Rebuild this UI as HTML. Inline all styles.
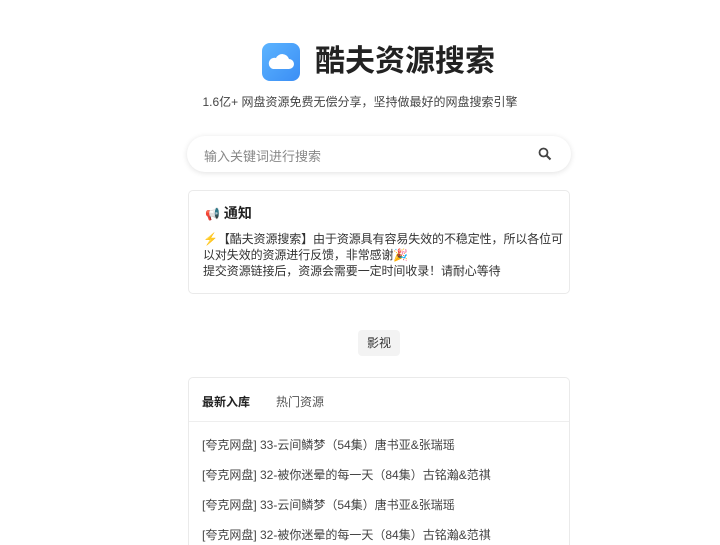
<!DOCTYPE html>
<html><head><meta charset="utf-8"><style>
*{margin:0;padding:0;box-sizing:border-box}
html,body{width:720px;height:545px;overflow:hidden}
body{background:#fff;font-family:"Liberation Sans","Noto Sans CJK SC",sans-serif;color:#333;position:relative}
.logo{position:absolute;left:262px;top:43px;width:38px;height:38px;border-radius:8px;background:linear-gradient(135deg,#5cb4ff,#3b8ef5)}
.title{position:absolute;left:315px;top:43px;font-size:30px;font-weight:bold;color:#222;line-height:38px}
.sub{position:absolute;left:0;width:720px;top:94px;text-align:center;font-size:12px;color:#444;line-height:16px}
.search{position:absolute;left:187px;top:136px;width:384px;height:36px;border-radius:18px;box-shadow:0 1px 6px rgba(0,0,0,.12);background:#fff}
.search span{position:absolute;left:17px;top:10px;font-size:13px;color:#888}
.card{position:absolute;left:188px;width:382px;border:1px solid #eaeaea;border-radius:5px;background:#fff}
.n{top:190px;height:104px}
.n h3{position:absolute;left:16px;top:12px;font-size:14px;font-weight:bold;color:#222}
.n p{position:absolute;left:14px;top:40px;width:370px;font-size:12px;line-height:16px;color:#333;letter-spacing:-0.1px}
.btn{position:absolute;left:358px;top:330px;width:42px;height:26px;background:#f3f3f3;border-radius:4px;font-size:12px;text-align:center;line-height:26px;color:#333}
.l{top:377px;height:168px;border-bottom:none;border-radius:5px 5px 0 0}
.tabs{height:44px;border-bottom:1px solid #eee;font-size:12px;position:relative}
.tabs b{position:absolute;left:13px;top:15px;color:#222}
.tabs i{position:absolute;left:87px;top:15px;font-style:normal;color:#555}
.it{position:absolute;left:13px;font-size:12px;color:#444}
</style></head><body>
<div class="logo"><svg width="38" height="38" viewBox="0 0 38 38"><path d="M11 26h16a5 5 0 0 0 0-10a7 7 0 0 0-13-1a5.5 5.5 0 0 0-3 11z" fill="#fff"/></svg></div>
<div class="title">酷夫资源搜索</div>
<div class="sub">1.6亿+ 网盘资源免费无偿分享，坚持做最好的网盘搜索引擎</div>
<div class="search"><span>输入关键词进行搜索</span>
<svg style="position:absolute;left:351px;top:11px" width="14" height="14" viewBox="0 0 14 14"><circle cx="5.5" cy="5.5" r="4" fill="none" stroke="#444" stroke-width="1.8"/><path d="M8.5 8.5l4 4" stroke="#444" stroke-width="2"/></svg></div>
<div class="card n"><h3><span style="color:#d33;font-size:12px">📢</span> 通知</h3>
<p><span style="color:#f80">⚡</span>【酷夫资源搜索】由于资源具有容易失效的不稳定性，所以各位可以对失效的资源进行反馈，非常感谢🎉<br>提交资源链接后，资源会需要一定时间收录！请耐心等待</p></div>
<div class="btn">影视</div>
<div class="card l"><div class="tabs"><b>最新入库</b><i>热门资源</i></div>
<div class="it" style="top:58px">[夸克网盘] 33-云间鳞梦（54集）唐书亚&amp;张瑞瑶</div>
<div class="it" style="top:88px">[夸克网盘] 32-被你迷晕的每一天（84集）古铭瀚&amp;范祺</div>
<div class="it" style="top:118px">[夸克网盘] 33-云间鳞梦（54集）唐书亚&amp;张瑞瑶</div>
<div class="it" style="top:148px">[夸克网盘] 32-被你迷晕的每一天（84集）古铭瀚&amp;范祺</div>
</div>
</body></html>
